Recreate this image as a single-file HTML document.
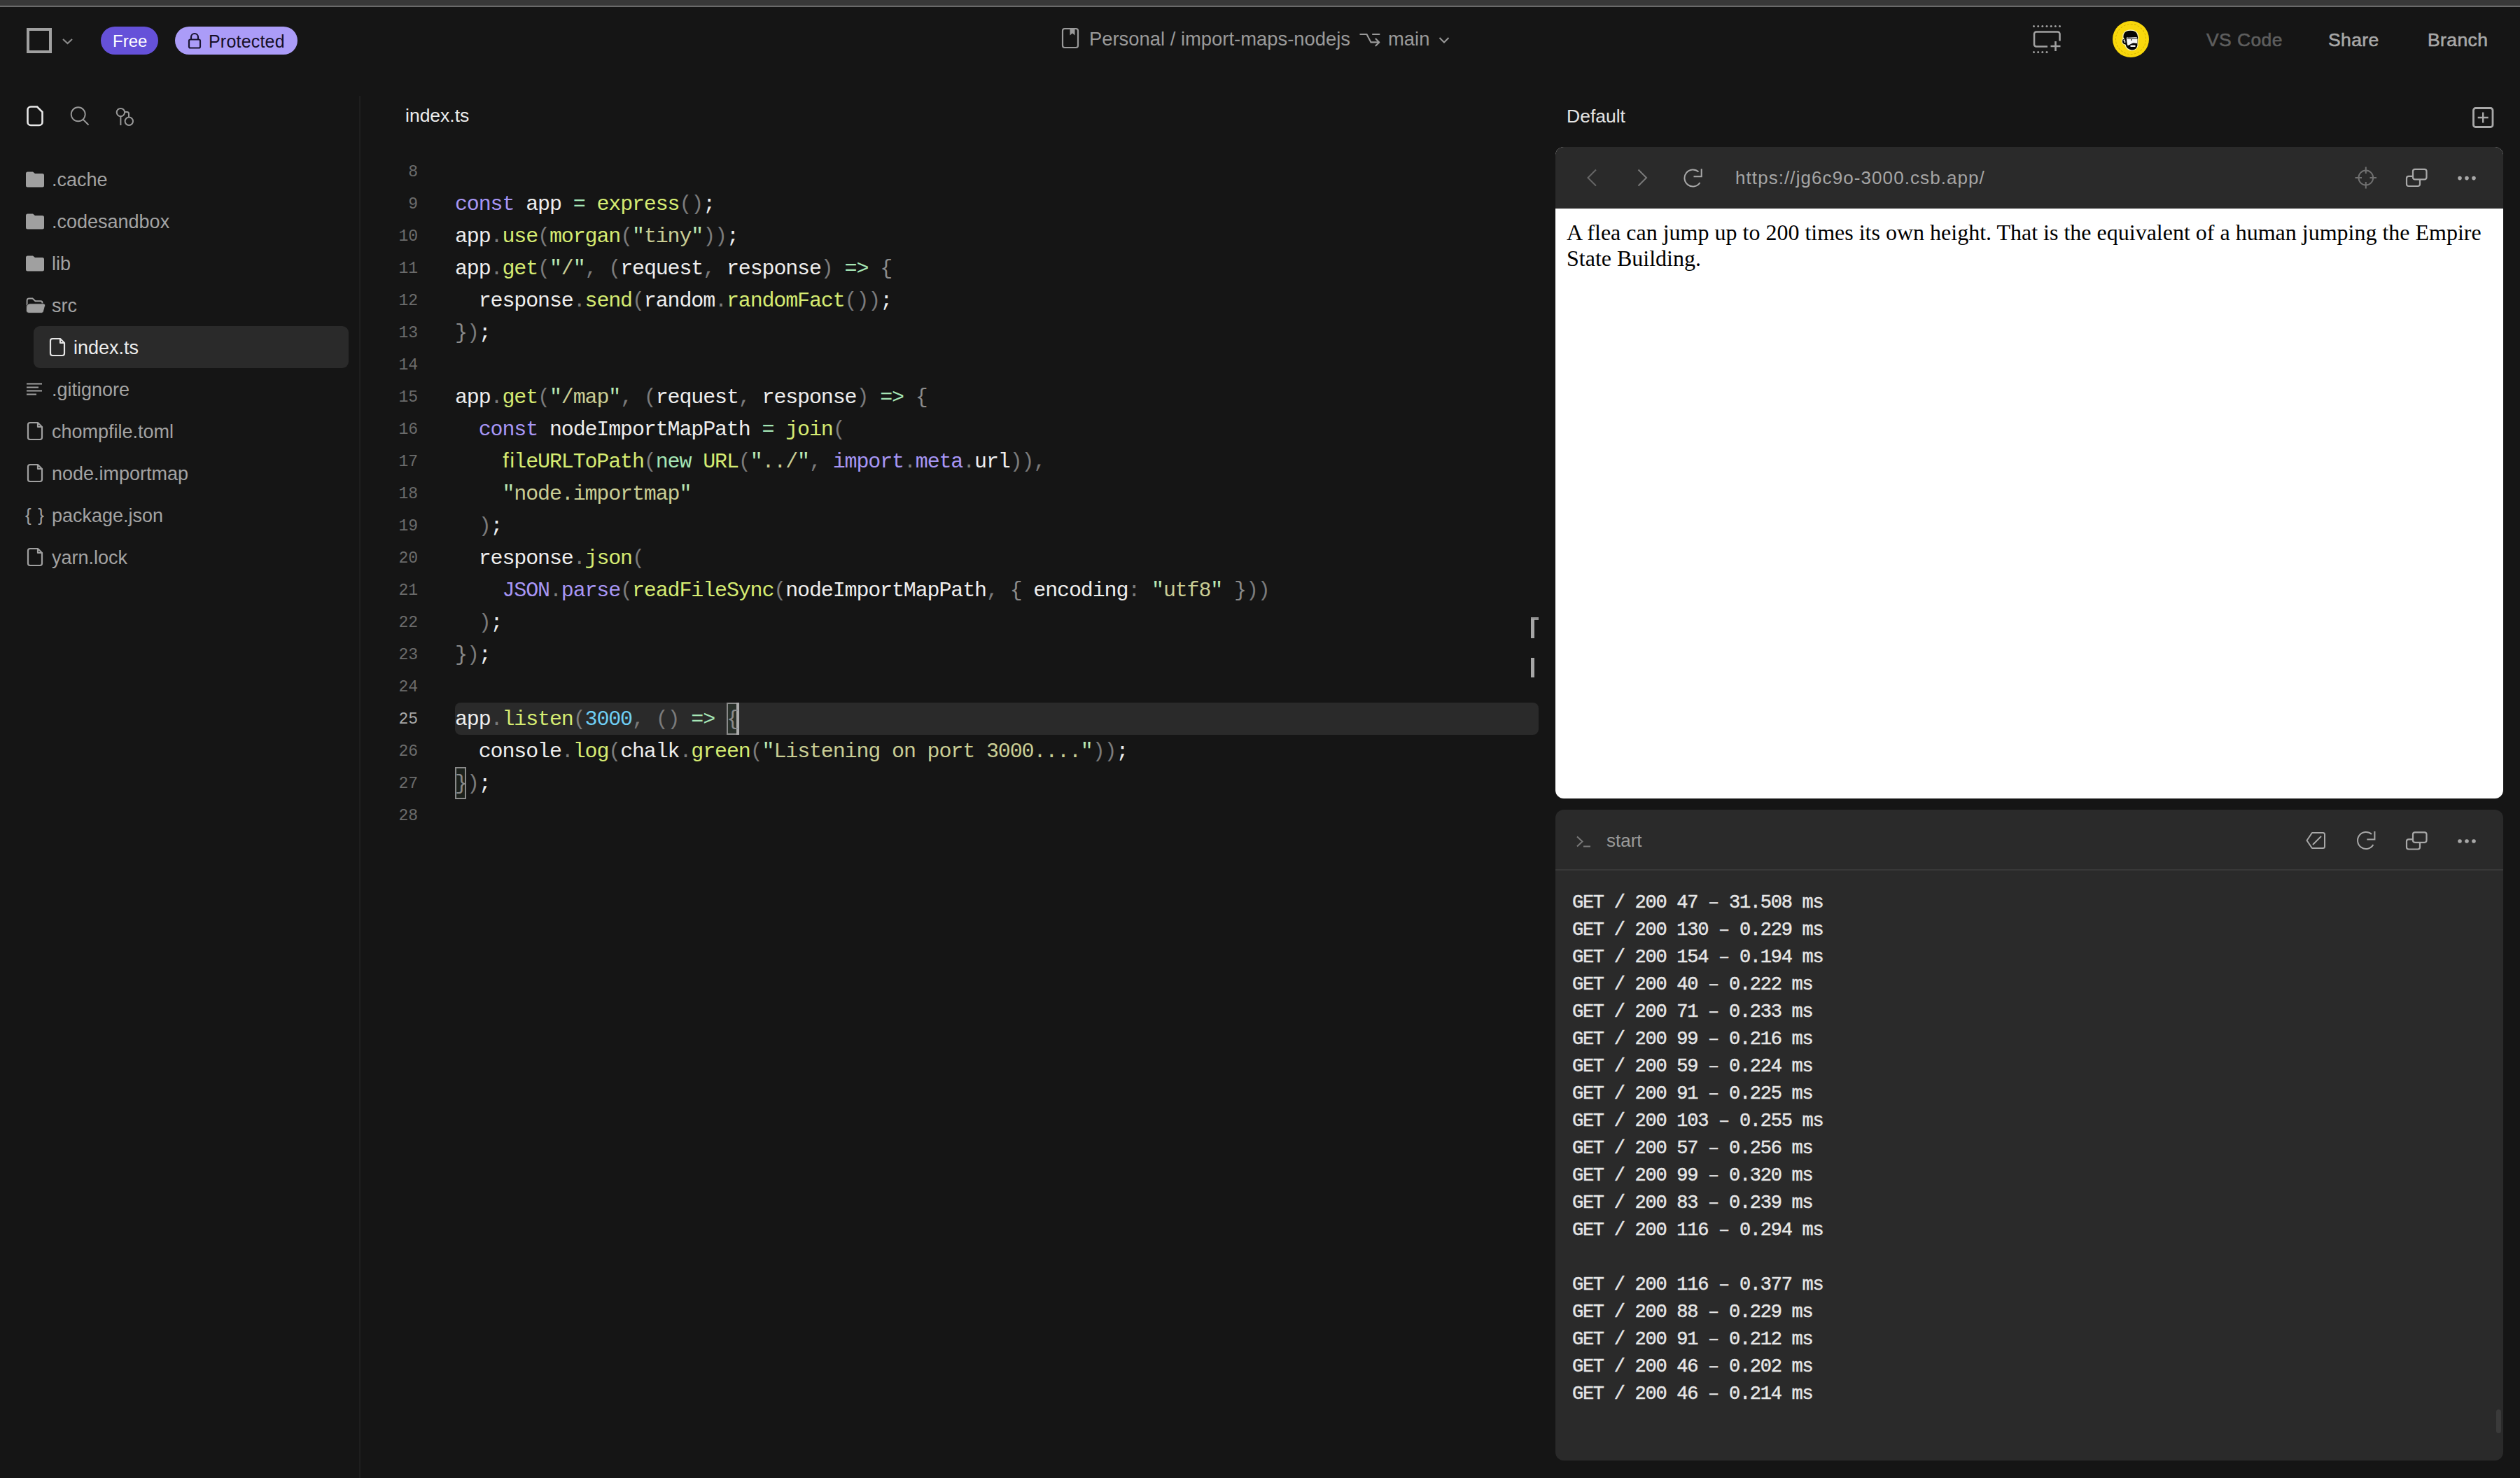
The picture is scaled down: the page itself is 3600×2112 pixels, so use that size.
<!DOCTYPE html>
<html><head><meta charset="utf-8">
<style>
*{margin:0;padding:0;box-sizing:border-box}
html,body{width:3600px;height:2112px;overflow:hidden;background:#151515}
body{position:relative;font-family:"Liberation Sans",sans-serif;color:#a3a3a3}
.a{position:absolute}
.t{position:absolute;white-space:pre;line-height:1}
svg{position:absolute;overflow:visible}
/* code */
.code{position:absolute;left:0;top:1px;font-family:"Liberation Mono",monospace;font-size:30px;letter-spacing:-1.14px;white-space:pre}
.ln{letter-spacing:0;position:absolute;left:520px;width:77px;text-align:right;height:46px;line-height:46px;color:#6b6b6b;font-size:23px}
.cl{position:absolute;left:650px;height:46px;line-height:46px;color:#e8e8e8}
.ln.cur{color:#a8a8a8}.k{color:#a796f4}.f{color:#d5eb72}.s{color:#c9cd94}.q{color:#b9e7b3}.p{color:#7b7b7b}.o{color:#a6e6b6}.n{color:#6fcff5}.b{color:#8b8b8b}.w{color:#eeeeee}
.term{position:absolute;left:2246px;font-family:"Liberation Mono",monospace;font-size:27px;letter-spacing:-1.27px;-webkit-text-stroke:0.45px #e6e6e6;color:#e6e6e6;white-space:pre;line-height:39px}
</style></head>
<body>
<!-- top strip -->
<div class="a" style="left:0;top:0;width:3600px;height:8px;background:#383838"></div>
<div class="a" style="left:0;top:8px;width:3600px;height:2px;background:#6a6a6a"></div>

<!-- TOPBAR -->
<div class="a" style="left:38px;top:40px;width:36px;height:36px;border:4px solid #a0a0a0"></div>
<svg style="left:0;top:0" width="1" height="1"><path d="M90 56 L96.5 62 L103 56" fill="none" stroke="#8a8a8a" stroke-width="2.2"/></svg>
<div class="a" style="left:144px;top:38px;width:82px;height:40px;border-radius:20px;background:#6551d9"></div>
<div class="t" style="left:161px;top:47px;font-size:24px;color:#fff">Free</div>
<div class="a" style="left:250px;top:38px;width:175px;height:40px;border-radius:20px;background:#ab9cf8"></div>
<svg style="left:0;top:0" width="1" height="1"><rect x="270" y="56.5" width="16" height="12" rx="2" fill="none" stroke="#1a1530" stroke-width="2.2"/><path d="M273 56.5 V53 a5 5 0 0 1 10 0 V56.5" fill="none" stroke="#1a1530" stroke-width="2.2"/></svg>
<div class="t" style="left:298px;top:47px;font-size:25px;color:#150f28;letter-spacing:0.2px">Protected</div>

<svg style="left:0;top:0" width="1" height="1"><rect x="1518" y="41" width="22" height="27" rx="3" fill="none" stroke="#9a9a9a" stroke-width="2.2"/><path d="M1528.5 41 V50.5 L1532 47.5 L1535.5 50.5 V41 Z" fill="#9a9a9a"/></svg>
<div class="t" style="left:1556px;top:42px;font-size:27.4px;color:#9a9a9a">Personal / import-maps-nodejs</div>
<svg style="left:0;top:0" width="1" height="1"><path d="M1943.3 49 H1952.5 L1958.5 60.4 H1970 M1965.4 55.5 L1970.3 60.4 L1965.4 65.3 M1961 49 H1970.5" fill="none" stroke="#9a9a9a" stroke-width="2.1" stroke-linejoin="round" stroke-linecap="round"/></svg>
<div class="t" style="left:1983px;top:42px;font-size:27.4px;color:#9a9a9a">main</div>
<svg style="left:0;top:0" width="1" height="1"><path d="M2056.5 54 L2063 60.5 L2069.5 54" fill="none" stroke="#9a9a9a" stroke-width="2"/></svg>

<!-- screen add icon -->
<svg style="left:0;top:0" width="1" height="1">
<g fill="#a0a0a0"><circle cx="2905.5" cy="37.5" r="1.5"/><circle cx="2911.7" cy="37.5" r="1.5"/><circle cx="2917.8" cy="37.5" r="1.5"/><circle cx="2924" cy="37.5" r="1.5"/><circle cx="2930.2" cy="37.5" r="1.5"/><circle cx="2936.3" cy="37.5" r="1.5"/><circle cx="2942.5" cy="37.5" r="1.5"/>
<circle cx="2905.5" cy="74.6" r="1.5"/><circle cx="2911.7" cy="74.6" r="1.5"/><circle cx="2917.8" cy="74.6" r="1.5"/><circle cx="2924" cy="74.6" r="1.5"/></g>
<path d="M2925 66.5 H2909 a3 3 0 0 1 -3 -3 V48.5 a3 3 0 0 1 3 -3 H2939.5 a3 3 0 0 1 3 3 V58.5 M2929.5 66 H2943.5 M2936.5 59 V73" fill="none" stroke="#a0a0a0" stroke-width="2.6"/>
</svg>
<!-- avatar -->
<div class="a" style="left:3018px;top:30px;width:52px;height:52px;border-radius:50%;background:#f9d80c"></div>
<div class="a" style="left:3022px;top:34px;width:44px;height:44px;border-radius:50%;border:1px dashed #d2b300"></div>
<svg style="left:0;top:0" width="1" height="1">
<path d="M3033 54 C3032 47 3036 43.5 3043 43.2 C3050 43 3054 46 3054.5 52 L3055 54.5 L3054 56 L3054 65 C3053 70 3049 72.2 3045 72 C3040 71.5 3037 68.5 3036 64 C3033 63.5 3031 61 3031.5 58 C3032 55.5 3033 55 3034 55.5 Z" fill="#050505" stroke="#fff8c0" stroke-width="1.2"/>
<path d="M3038 53.5 C3042 54 3048 53 3053 53.5 V62 C3051 62 3049 61 3046 62 C3043 63 3041 65 3039.5 65 C3038.5 62 3038 58 3038 53.5 Z" fill="#f8f8f8"/>
<path d="M3039 55.5 H3053 M3045 55 V58" stroke="#111" stroke-width="1.2"/>
<rect x="3043.5" y="64.5" width="7" height="2.5" fill="#eeeeee"/>
<path d="M3033.5 57.5 C3035 57 3036 59 3035.5 61" fill="none" stroke="#f5f5f5" stroke-width="1.5"/>
</svg>
<div class="t" style="left:3152px;top:44px;font-size:26.5px;color:#5e5e5e;-webkit-text-stroke:0.6px #5e5e5e;letter-spacing:0.4px">VS Code</div>
<div class="t" style="left:3326px;top:44px;font-size:26.5px;color:#a8a8a8;-webkit-text-stroke:0.6px #a8a8a8;letter-spacing:0.4px">Share</div>
<div class="t" style="left:3468px;top:44px;font-size:26.5px;color:#a8a8a8;-webkit-text-stroke:0.6px #a8a8a8;letter-spacing:0.4px">Branch</div>

<!-- SIDEBAR -->
<div class="a" style="left:513px;top:137px;width:1.5px;height:1975px;background:#1e1e1e"></div>
<svg style="left:0;top:0" width="1" height="1">
<path d="M44 152.5 H53 L60.5 160 V174.5 a4.5 4.5 0 0 1 -4.5 4.5 H44 a4.5 4.5 0 0 1 -4.5 -4.5 V157 a4.5 4.5 0 0 1 4.5 -4.5 Z" fill="none" stroke="#e8e8e8" stroke-width="2.6"/>
<circle cx="111.7" cy="163.3" r="10" fill="none" stroke="#999" stroke-width="1.9"/><path d="M118.5 170.5 L126.5 178.5" stroke="#999" stroke-width="1.9"/>
<circle cx="172.4" cy="160.6" r="5.7" fill="none" stroke="#999" stroke-width="2"/><path d="M172.4 166.3 V179 M178.5 160 H181.5 a2.5 2.5 0 0 1 2.5 2.5 V167.5" fill="none" stroke="#999" stroke-width="2"/><circle cx="184.3" cy="173.3" r="5.7" fill="none" stroke="#999" stroke-width="2"/>
</svg>
<div class="a" style="left:48px;top:466px;width:450px;height:60px;border-radius:9px;background:#2a2a2a"></div>
<!--TREE--><svg style="left:0;top:0" width="1" height="1"><path d="M37 248 a2.5 2.5 0 0 1 2.5 -2.5 H47 L50 248 H60.5 a2.5 2.5 0 0 1 2.5 2.5 V265 a2.5 2.5 0 0 1 -2.5 2.5 H39.5 a2.5 2.5 0 0 1 -2.5 -2.5 Z" fill="#a0a0a0"/><path d="M37 308 a2.5 2.5 0 0 1 2.5 -2.5 H47 L50 308 H60.5 a2.5 2.5 0 0 1 2.5 2.5 V325 a2.5 2.5 0 0 1 -2.5 2.5 H39.5 a2.5 2.5 0 0 1 -2.5 -2.5 Z" fill="#a0a0a0"/><path d="M37 368 a2.5 2.5 0 0 1 2.5 -2.5 H47 L50 368 H60.5 a2.5 2.5 0 0 1 2.5 2.5 V385 a2.5 2.5 0 0 1 -2.5 2.5 H39.5 a2.5 2.5 0 0 1 -2.5 -2.5 Z" fill="#a0a0a0"/><path d="M38.6 444 V429.5 a3 3 0 0 1 3 -3 H46.5 L50.5 430.2 H58 a2.5 2.5 0 0 1 2.5 2.5 V434.5" fill="none" stroke="#a0a0a0" stroke-width="1.9"/><path d="M42.5 433.8 H62 a2.5 2.5 0 0 1 2.5 3 L62.3 445 a3 3 0 0 1 -3 2.3 H41 a3.5 3.5 0 0 1 -3.5 -3.5 V440 a6 6 0 0 1 5 -6.2 Z" fill="#a0a0a0" stroke="#151515" stroke-width="0.8"/><path d="M75 484 H86 L92 490 V505 a3 3 0 0 1 -3 3 H75 a3 3 0 0 1 -3 -3 V487 a3 3 0 0 1 3 -3 Z M86 484 V490 H92" fill="none" stroke="#e6e6e6" stroke-width="2.2" stroke-linejoin="round"/><path d="M38 548.5 H60 M38 553.5 H55 M38 558.5 H60 M38 563.5 H52" stroke="#a0a0a0" stroke-width="2"/><path d="M43 604 H54 L60 610 V625 a3 3 0 0 1 -3 3 H43 a3 3 0 0 1 -3 -3 V607 a3 3 0 0 1 3 -3 Z M54 604 V610 H60" fill="none" stroke="#a0a0a0" stroke-width="2.2" stroke-linejoin="round"/><path d="M43 664 H54 L60 670 V685 a3 3 0 0 1 -3 3 H43 a3 3 0 0 1 -3 -3 V667 a3 3 0 0 1 3 -3 Z M54 664 V670 H60" fill="none" stroke="#a0a0a0" stroke-width="2.2" stroke-linejoin="round"/><text x="36" y="745" font-family="Liberation Sans" font-size="26" fill="#a0a0a0" textLength="27" lengthAdjust="spacing">{ }</text><path d="M43 784 H54 L60 790 V805 a3 3 0 0 1 -3 3 H43 a3 3 0 0 1 -3 -3 V787 a3 3 0 0 1 3 -3 Z M54 784 V790 H60" fill="none" stroke="#a0a0a0" stroke-width="2.2" stroke-linejoin="round"/></svg>
<div class="t" style="left:74px;top:244px;font-size:27px;color:#a3a3a3">.cache</div>
<div class="t" style="left:74px;top:304px;font-size:27px;color:#a3a3a3">.codesandbox</div>
<div class="t" style="left:74px;top:364px;font-size:27px;color:#a3a3a3">lib</div>
<div class="t" style="left:74px;top:424px;font-size:27px;color:#a3a3a3">src</div>
<div class="t" style="left:105px;top:484px;font-size:27px;color:#ececec">index.ts</div>
<div class="t" style="left:74px;top:544px;font-size:27px;color:#a3a3a3">.gitignore</div>
<div class="t" style="left:74px;top:604px;font-size:27px;color:#a3a3a3">chompfile.toml</div>
<div class="t" style="left:74px;top:664px;font-size:27px;color:#a3a3a3">node.importmap</div>
<div class="t" style="left:74px;top:724px;font-size:27px;color:#a3a3a3">package.json</div>
<div class="t" style="left:74px;top:784px;font-size:27px;color:#a3a3a3">yarn.lock</div><!--/TREE-->

<!-- EDITOR -->
<div class="t" style="left:579px;top:152px;font-size:26.5px;color:#ececec">index.ts</div>
<div class="a" style="left:650px;top:1004px;width:1548px;height:46px;border-radius:8px;background:#2a2a2a"></div>
<!--EDEC-->
<div class="a" style="left:1038px;top:1004px;width:18px;height:46px;border:2px solid #8a8a8a;background:#29302a"></div>
<div class="a" style="left:1052px;top:1004px;width:4px;height:46px;background:#ababab"></div>
<div class="a" style="left:650px;top:1096px;width:16px;height:46px;border:2px solid #8a8a8a;background:#1c211c"></div>
<div class="a" style="left:2187px;top:882px;width:11px;height:4px;background:#919191"></div>
<div class="a" style="left:2187px;top:884px;width:5px;height:28px;background:#a6a6a6"></div>
<div class="a" style="left:2187px;top:940px;width:5px;height:28px;background:#a6a6a6"></div>
<!--/EDEC-->
<div class="code" id="code"><!--CODE-->
<div class="ln" style="top:222px">8</div>
<div class="ln" style="top:268px">9</div>
<div class="cl" style="top:268px"><span class="k">const</span><span class="w"> app </span><span class="o">=</span><span class="w"> </span><span class="f">express</span><span class="p">()</span><span class="w">;</span></div>
<div class="ln" style="top:314px">10</div>
<div class="cl" style="top:314px"><span class="w">app</span><span class="p">.</span><span class="f">use</span><span class="p">(</span><span class="f">morgan</span><span class="p">(</span><span class="q">"</span><span class="s">tiny</span><span class="q">"</span><span class="p">))</span><span class="w">;</span></div>
<div class="ln" style="top:360px">11</div>
<div class="cl" style="top:360px"><span class="w">app</span><span class="p">.</span><span class="f">get</span><span class="p">(</span><span class="q">"</span><span class="s">/</span><span class="q">"</span><span class="p">, (</span><span class="w">request</span><span class="p">, </span><span class="w">response</span><span class="p">) </span><span class="o">=&gt;</span><span class="w"> </span><span class="b">{</span></div>
<div class="ln" style="top:406px">12</div>
<div class="cl" style="top:406px"><span class="w">  response</span><span class="p">.</span><span class="f">send</span><span class="p">(</span><span class="w">random</span><span class="p">.</span><span class="f">randomFact</span><span class="p">())</span><span class="w">;</span></div>
<div class="ln" style="top:452px">13</div>
<div class="cl" style="top:452px"><span class="b">}</span><span class="p">)</span><span class="w">;</span></div>
<div class="ln" style="top:498px">14</div>
<div class="ln" style="top:544px">15</div>
<div class="cl" style="top:544px"><span class="w">app</span><span class="p">.</span><span class="f">get</span><span class="p">(</span><span class="q">"</span><span class="s">/map</span><span class="q">"</span><span class="p">, (</span><span class="w">request</span><span class="p">, </span><span class="w">response</span><span class="p">) </span><span class="o">=&gt;</span><span class="w"> </span><span class="b">{</span></div>
<div class="ln" style="top:590px">16</div>
<div class="cl" style="top:590px"><span class="k">  const</span><span class="w"> nodeImportMapPath </span><span class="o">=</span><span class="w"> </span><span class="f">join</span><span class="p">(</span></div>
<div class="ln" style="top:636px">17</div>
<div class="cl" style="top:636px"><span class="f">    ﬁleURLToPath</span><span class="p">(</span><span class="o">new</span><span class="w"> </span><span class="f">URL</span><span class="p">(</span><span class="q">"</span><span class="s">../</span><span class="q">"</span><span class="p">, </span><span class="k">import</span><span class="p">.</span><span class="k">meta</span><span class="p">.</span><span class="w">url</span><span class="p">))</span><span class="p">,</span></div>
<div class="ln" style="top:682px">18</div>
<div class="cl" style="top:682px"><span class="q">    "</span><span class="s">node.importmap</span><span class="q">"</span></div>
<div class="ln" style="top:728px">19</div>
<div class="cl" style="top:728px"><span class="p">  )</span><span class="w">;</span></div>
<div class="ln" style="top:774px">20</div>
<div class="cl" style="top:774px"><span class="w">  response</span><span class="p">.</span><span class="f">json</span><span class="p">(</span></div>
<div class="ln" style="top:820px">21</div>
<div class="cl" style="top:820px"><span class="k">    JSON</span><span class="p">.</span><span class="k">parse</span><span class="p">(</span><span class="f">readFileSync</span><span class="p">(</span><span class="w">nodeImportMapPath</span><span class="p">, </span><span class="b">{</span><span class="w"> encoding</span><span class="p">: </span><span class="q">"</span><span class="s">utf8</span><span class="q">"</span><span class="w"> </span><span class="b">}</span><span class="p">))</span></div>
<div class="ln" style="top:866px">22</div>
<div class="cl" style="top:866px"><span class="p">  )</span><span class="w">;</span></div>
<div class="ln" style="top:912px">23</div>
<div class="cl" style="top:912px"><span class="b">}</span><span class="p">)</span><span class="w">;</span></div>
<div class="ln" style="top:958px">24</div>
<div class="ln cur" style="top:1004px">25</div>
<div class="cl" style="top:1004px"><span class="w">app</span><span class="p">.</span><span class="f">listen</span><span class="p">(</span><span class="n">3000</span><span class="p">, () </span><span class="o">=&gt;</span><span class="w"> </span><span class="b">{</span></div>
<div class="ln" style="top:1050px">26</div>
<div class="cl" style="top:1050px"><span class="w">  console</span><span class="p">.</span><span class="f">log</span><span class="p">(</span><span class="w">chalk</span><span class="p">.</span><span class="f">green</span><span class="p">(</span><span class="q">"</span><span class="s">Listening on port 3000....</span><span class="q">"</span><span class="p">))</span><span class="w">;</span></div>
<div class="ln" style="top:1096px">27</div>
<div class="cl" style="top:1096px"><span class="b">}</span><span class="p">)</span><span class="w">;</span></div>
<div class="ln" style="top:1142px">28</div>
</div><!--/CODE-->

<!-- PREVIEW -->
<div class="t" style="left:2238px;top:153px;font-size:26.5px;color:#e4e4e4">Default</div>
<div class="a" style="left:2222px;top:210px;width:1354px;height:931px;border-radius:12px;background:#fff;overflow:hidden">
  <div class="a" style="left:0;top:0;width:1354px;height:88px;background:#2a2a2a"></div>
</div>
<div class="t" style="left:2479px;top:241px;font-size:26px;color:#a5a5a5;letter-spacing:1.08px">https://jg6c9o-3000.csb.app/</div>
<div class="a" style="left:2238px;top:314px;width:1322px;font-family:'Liberation Serif',serif;font-size:32px;line-height:36.5px;color:#000">A flea can jump up to 200 times its own height. That is the equivalent of a human jumping the Empire State Building.</div>

<!--ICONS-->
<svg style="left:0;top:0" width="1" height="1">
<rect x="3533.5" y="154.5" width="27.5" height="27" rx="3" fill="none" stroke="#a8a8a8" stroke-width="2.8"/>
<path d="M3547.2 160.5 V175.5 M3539.7 168 H3554.7" stroke="#a8a8a8" stroke-width="2.4"/>
<path d="M2280 242.5 L2268.5 254 L2280 265.5" fill="none" stroke="#666" stroke-width="2"/>
<path d="M2340.5 242.5 L2352 254 L2340.5 265.5" fill="none" stroke="#7a7a7a" stroke-width="2"/>
<path d="M2428.5 261 A12 12 0 1 1 2426.5 245.5" fill="none" stroke="#a8a8a8" stroke-width="2"/>
<path d="M2430.7 241.3 V252.3 H2419.5" fill="none" stroke="#a8a8a8" stroke-width="2"/>
<circle cx="3379.8" cy="254" r="10.4" fill="none" stroke="#707070" stroke-width="2"/>
<path d="M3379.8 238.5 V248 M3379.8 260 V269.5 M3364.5 254 H3374 M3385.5 254 H3395" stroke="#707070" stroke-width="2"/>
<rect x="3447" y="241.8" width="19.5" height="14.5" rx="3" fill="none" stroke="#a8a8a8" stroke-width="2.2"/>
<path d="M3447 251.8 H3441 a3 3 0 0 0 -3 3 V263 a3 3 0 0 0 3 3 H3454 a3 3 0 0 0 3 -3 V256.3" fill="none" stroke="#a8a8a8" stroke-width="2.2"/>
<circle cx="3514" cy="254.6" r="2.8" fill="#a8a8a8"/><circle cx="3524" cy="254.6" r="2.8" fill="#a8a8a8"/><circle cx="3534" cy="254.6" r="2.8" fill="#a8a8a8"/>
</svg>
<!--/ICONS-->
<!-- TERMINAL -->
<div class="a" style="left:2222px;top:1157px;width:1354px;height:930px;border-radius:12px;background:#2a2a2a"></div>
<div class="a" style="left:2222px;top:1242px;width:1354px;height:2px;background:#383838"></div>
<div class="t" style="left:2295px;top:1188px;font-size:26px;color:#9a9a9a">start</div>
<!--TICONS-->
<svg style="left:0;top:0" width="1" height="1">
<path d="M2253 1195.5 L2260.5 1202.5 L2253 1209.5 M2262 1209.5 H2272" fill="none" stroke="#7a7a7a" stroke-width="2"/>
<path d="M3295.5 1201 L3303 1190 H3318.5 a2.5 2.5 0 0 1 2.5 2.5 V1209.5 a2.5 2.5 0 0 1 -2.5 2.5 H3303 Z" fill="none" stroke="#a8a8a8" stroke-width="2" stroke-linejoin="round"/><path d="M3304 1207 L3316 1195" stroke="#a8a8a8" stroke-width="2"/>
<path d="M3390.4 1207 A12 12 0 1 1 3388 1192" fill="none" stroke="#a8a8a8" stroke-width="2"/>
<path d="M3392.4 1188 V1199.4 H3381.3" fill="none" stroke="#a8a8a8" stroke-width="2"/>
<rect x="3447" y="1189.3" width="19.5" height="14.5" rx="3" fill="none" stroke="#a8a8a8" stroke-width="2.2"/>
<path d="M3447 1199.3 H3441 a3 3 0 0 0 -3 3 V1210.5 a3 3 0 0 0 3 3 H3454 a3 3 0 0 0 3 -3 V1203.8" fill="none" stroke="#a8a8a8" stroke-width="2.2"/>
<circle cx="3514" cy="1202" r="2.8" fill="#a8a8a8"/><circle cx="3524" cy="1202" r="2.8" fill="#a8a8a8"/><circle cx="3534" cy="1202" r="2.8" fill="#a8a8a8"/>
</svg>
<div class="a" style="left:3566px;top:2014px;width:7px;height:34px;border-radius:4px;background:#3a3a3a"></div>
<!--/TICONS-->
<div class="term" id="term" style="top:1271px"><!--TERM-->GET / 200 47 – 31.508 ms
GET / 200 130 – 0.229 ms
GET / 200 154 – 0.194 ms
GET / 200 40 – 0.222 ms
GET / 200 71 – 0.233 ms
GET / 200 99 – 0.216 ms
GET / 200 59 – 0.224 ms
GET / 200 91 – 0.225 ms
GET / 200 103 – 0.255 ms
GET / 200 57 – 0.256 ms
GET / 200 99 – 0.320 ms
GET / 200 83 – 0.239 ms
GET / 200 116 – 0.294 ms

GET / 200 116 – 0.377 ms
GET / 200 88 – 0.229 ms
GET / 200 91 – 0.212 ms
GET / 200 46 – 0.202 ms
GET / 200 46 – 0.214 ms<!--/TERM--></div>
</body></html>
